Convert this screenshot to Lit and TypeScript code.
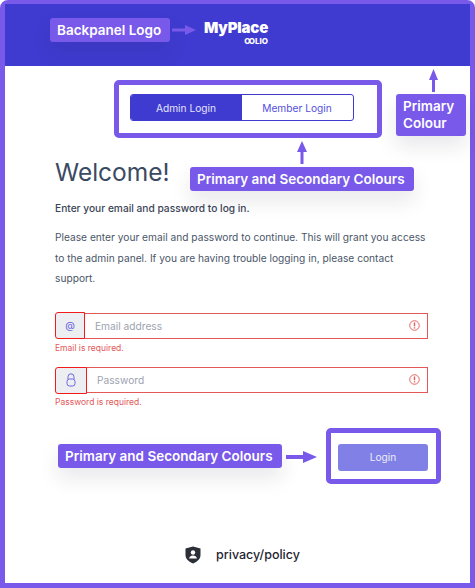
import { LitElement, html, css, svg } from "lit";
import { customElement } from "lit/decorators.js";

const alertIcon = svg`<svg class="alert" viewBox="0 0 12 12" width="11" height="11">
  <circle cx="6" cy="6" r="5.2" fill="none" stroke="#e45858" stroke-width="1"></circle>
  <path d="M6 2.800v3.900M6 8v1.300" stroke="#e45858" stroke-width="1.500" fill="none"></path>
</svg>`;

// arrow is placed by left/top since it points from one note to its target
const arrow = (x: number, y: number, w: number, h: number, d: string) =>
  html`<svg class="arrow" style="left: ${x}px; top: ${y}px" width="${w}" height="${h}" viewBox="0 0 ${w} ${h}">
    ${svg`<path d="${d}" fill="#7859ea"></path>`}
  </svg>`;

@customElement("app-root")
class AppRoot extends LitElement {
  static styles = css`
    :host {
      display: block;
      position: relative;
      width: 475px;
      height: 588px;
      overflow: hidden;
      background: #fff;
      font-family: Inter, "Liberation Sans", sans-serif;
    }

    * {
      box-sizing: border-box;
    }

    .frame {
      height: 588px;
      border: 5px solid #7859ea;
      border-top-width: 4px;
      border-radius: 8px 8px 0 0;
      display: flex;
      flex-direction: column;
    }

    .backpanel {
      height: 62px;
      flex: none;
      background: #3f3bd0;
      display: flex;
      justify-content: center;
      padding: 15px 3px 0 0;
    }

    .logo {
      display: flex;
      flex-direction: column;
      align-items: flex-end;
      color: #fff;
      font-weight: 700;
      line-height: 1;
    }

    .logo b {
      font-size: 15px;
      line-height: 18px;
      letter-spacing: -0.2px;
    }

    .logo small {
      font-size: 8px;
      line-height: 6px;
      font-weight: 800;
      margin-top: 1px;
    }

    .logo small i {
      font-style: normal;
      letter-spacing: -1.5px;
      margin-right: 1.5px;
    }

    main {
      flex: 1;
      padding: 28px 42px 0 50px;
      display: flex;
      flex-direction: column;
    }

    .tabs {
      display: flex;
      align-self: center;
      width: 224px;
      height: 27px;
      border: 1px solid #3f3bd0;
      border-radius: 3px;
      overflow: hidden;
      font-size: 10.2px;
    }

    .tabs div {
      flex: 1;
      display: flex;
      align-items: center;
      justify-content: center;
      color: #5450dd;
    }

    .tabs .on {
      background: #3f3bd0;
      color: #e4e4fa;
    }

    h1 {
      margin: 35px 0 0;
      font-size: 24.5px;
      line-height: 32px;
      font-weight: 400;
      color: #3b4a63;
    }

    .lead {
      margin: 13px 0 0;
      font-size: 10.2px;
      line-height: 14px;
      font-weight: 500;
      color: #3b4558;
    }

    .body {
      margin: 12px 0 0;
      font-size: 10.2px;
      line-height: 20.5px;
      color: #4a5568;
    }

    .field {
      display: flex;
      height: 26px;
      margin-top: 24px;
    }

    .field + .err + .field {
      margin-top: 14px;
    }

    .addon {
      flex: none;
      width: 30px;
      height: 27px;
      margin-top: -1px;
      position: relative;
      background: #eceef1;
      border: 1.5px solid #f01c1c;
      border-radius: 3px 0 0 3px;
      display: flex;
      align-items: center;
      justify-content: center;
      color: #5f5ce0;
      font-size: 10px;
    }

    .addon.wide {
      width: 32px;
      margin-top: 0;
    }

    .input {
      flex: 1;
      margin-left: -1px;
      border: 1px solid #e45858;
      display: flex;
      align-items: center;
      justify-content: space-between;
      padding: 0 7px 0 10px;
      font-size: 10.2px;
      color: #9ca3af;
    }

    .err {
      margin-top: 4px;
      font-size: 8.5px;
      line-height: 10px;
      color: #e45858;
    }

    .action {
      align-self: flex-end;
      width: 90px;
      height: 27px;
      margin-top: 37px;
      border-radius: 3px;
      background: #8080e6;
      color: #ecedfb;
      font-size: 10.2px;
      display: flex;
      align-items: center;
      justify-content: center;
    }

    footer {
      margin-top: auto;
      height: 65px;
      display: flex;
      justify-content: center;
      align-items: flex-start;
      gap: 15px;
      padding: 28px 0 0 2px;
      font-size: 12.5px;
      line-height: 18px;
      font-weight: 500;
      color: #1f2430;
    }

    footer svg {
      display: block;
    }

    /* annotation layer, sits over the page */
    .note {
      position: absolute;
      background: #7859ea;
      color: #fff;
      border-radius: 3px;
      font-size: 13.5px;
      font-weight: 600;
      line-height: 18px;
      padding: 3px 9px 3px 7px;
      white-space: nowrap;
      box-shadow: 0 10px 20px rgba(30, 30, 60, 0.1);
    }

    .note.stack {
      width: 70px;
      white-space: normal;
      line-height: 17px;
      padding: 4px 7px;
    }

    .ring {
      position: absolute;
      border: 5px solid #7859ea;
      border-radius: 5px;
    }

    .arrow {
      position: absolute;
      display: block;
    }
  `;

  render() {
    return html`
      <div class="frame">
        <div class="backpanel">
          <div class="logo">
            <b>MyPlace</b>
            <small><i>OO</i>LIO</small>
          </div>
        </div>
        <main>
          <div class="tabs">
            <div class="on">Admin Login</div>
            <div>Member Login</div>
          </div>
          <h1>Welcome!</h1>
          <p class="lead">Enter your email and password to log in.</p>
          <p class="body">
            Please enter your email and password to continue. This will grant
            you access to the admin panel. If you are having trouble logging in,
            please contact support.
          </p>
          <div class="field">
            <div class="addon">@</div>
            <div class="input">Email address ${alertIcon}</div>
          </div>
          <div class="err">Email is required.</div>
          <div class="field">
            <div class="addon wide">
              <svg width="12" height="14" viewBox="0 0 12 14" fill="none" stroke="#6a67e2" stroke-width="1">
                <path d="M3 6V3.800a3 3 0 0 1 6 0V6"></path>
                <rect x="2" y="6" width="8" height="7" rx="2.500"></rect>
              </svg>
            </div>
            <div class="input">Password ${alertIcon}</div>
          </div>
          <div class="err">Password is required.</div>
          <div class="action">Login</div>
          <footer>
            <svg width="16" height="18" viewBox="0 0 16 18">
              <path d="M8 .5 15.500 2.500V9c0 4-3.200 6.800-7.500 8.500C3.700 15.800.5 13 .5 9V2.500Z" fill="#2b2f38"></path>
              <circle cx="8" cy="6.500" r="2.200" fill="#fff"></circle>
              <path d="M4 12.500c.5-2 2-3 4-3s3.500 1 4 3Z" fill="#fff"></path>
            </svg>
            <span>privacy/policy</span>
          </footer>
        </main>
      </div>

      <div class="note" style="left: 50px; top: 18px">Backpanel Logo</div>
      <div class="note stack" style="left: 396px; top: 94px">Primary Colour</div>
      <div class="note" style="left: 190px; top: 167px">Primary and Secondary Colours</div>
      <div class="note" style="left: 58px; top: 444px">Primary and Secondary Colours</div>

      <div class="ring" style="left: 114px; top: 80px; width: 268px; height: 58px"></div>
      <div class="ring" style="left: 326px; top: 428px; width: 115px; height: 56px"></div>

      ${arrow(172, 25, 24, 10, "M0 3.500h13V0l11 5-11 5V6.500H0Z")}
      ${arrow(429, 69, 9, 23, "M4.500 0 9 11H6V23H3V11H0Z")}
      ${arrow(297, 141, 10, 23, "M5 0 10 11H6.500V23H3.500V11H0Z")}
      ${arrow(286, 451, 31, 12, "M0 4h17V0l14 6-14 6V8H0Z")}
    `;
  }
}

export { AppRoot };
